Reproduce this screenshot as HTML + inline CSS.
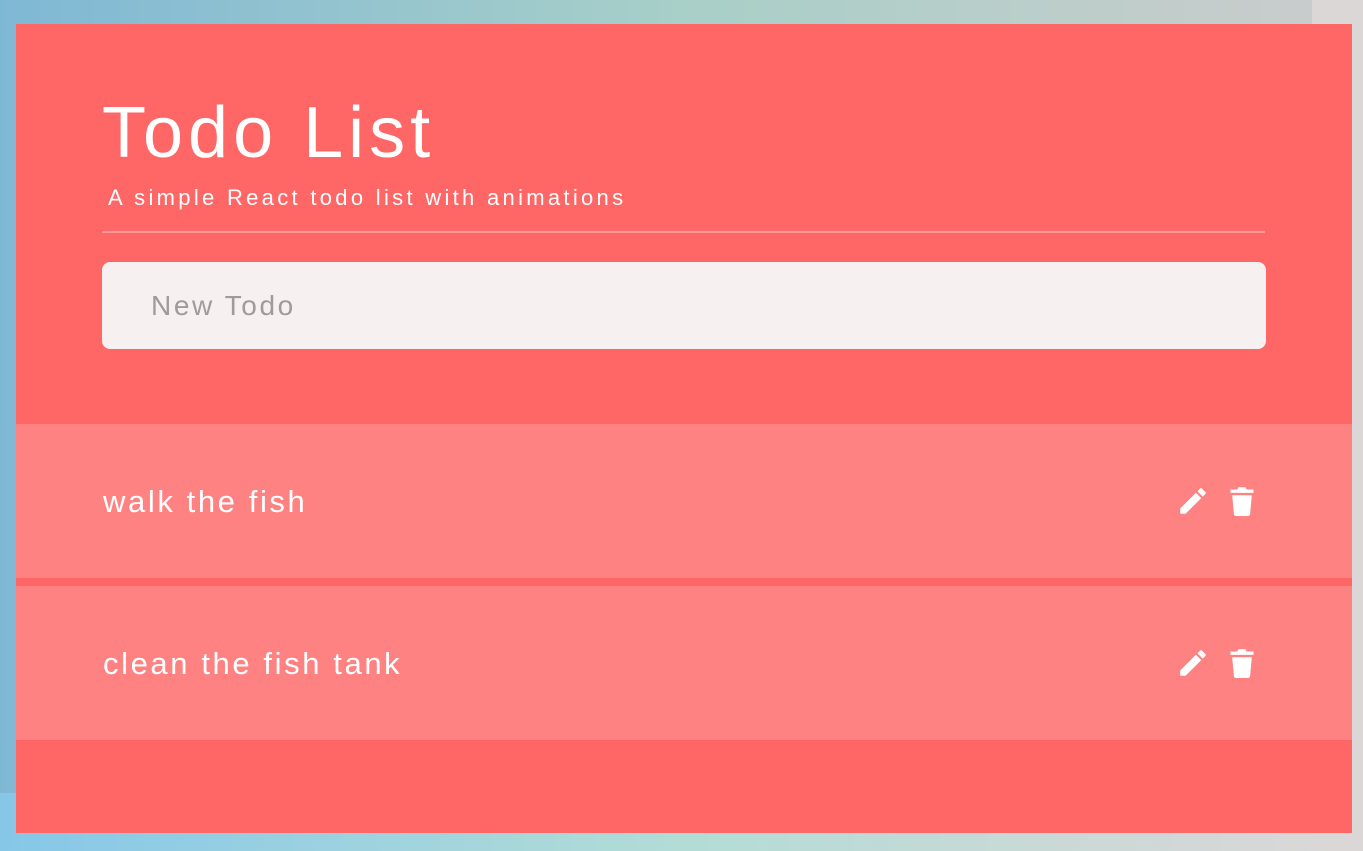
<!DOCTYPE html>
<html><head><style>
body{margin:0;width:1363px;height:851px;overflow:hidden;position:relative;font-family:"Liberation Sans",sans-serif;background:linear-gradient(90deg,#7fb8d5 0%,#a8cfc8 50%,#cccccc 100%);}
.rs{position:absolute;left:1312px;top:0;width:51px;height:851px;background:#dcd7d7}
.bs{position:absolute;left:0;top:793px;width:1363px;height:58px;background:linear-gradient(90deg,#86c7e8 0%,#b3dcd6 50%,#dcd7d7 100%)}
.card{position:absolute;left:16px;top:24px;width:1336px;height:809px;background:#ff6666}
h1{position:absolute;left:86px;top:64px;margin:0;font-weight:normal;font-size:72px;color:#fff;letter-spacing:5px;line-height:90px}
.sub{position:absolute;left:92px;top:161px;font-size:22px;color:#fff;letter-spacing:3.3px}
.hr{position:absolute;left:86px;top:207px;width:1163px;height:2px;background:#ff9a9a}
.inp{position:absolute;left:86px;top:238px;width:1164px;height:87px;border-radius:8px;background:#f6f0f0}
.inp span{position:absolute;left:49px;top:28px;font-size:28px;color:#a09a9a;letter-spacing:2.6px}
.item{position:absolute;left:0;width:1336px;height:154px;background:#ff8282}
.item .t{position:absolute;left:87px;top:60px;font-size:31px;color:#fff;letter-spacing:2.6px}
.item svg{position:absolute;top:60px}
</style></head><body>
<div class="rs"></div><div class="bs"></div>
<div class="card">
<h1>Todo List</h1>
<div class="sub">A simple React todo list with animations</div>
<div class="hr"></div>
<div class="inp"><span>New Todo</span></div>
<div class="item" style="top:400px"><div class="t">walk the fish</div>
<svg style="left:1160px" width="34" height="34" viewBox="0 0 24 24"><path fill="#fff" d="M3 17.25V21h3.75L17.81 9.94l-3.75-3.75L3 17.25zM20.71 7.04a1 1 0 000-1.41l-2.34-2.34a1 1 0 00-1.41 0l-1.83 1.83 3.75 3.75 1.83-1.83z"/></svg>
<svg style="left:1212px;top:62px" width="28" height="30" viewBox="0 0 24 26"><path fill="#fff" d="M2 3h6l1-2h6l1 2h6v3H2zM3.5 8h17l-1.5 16.5c-.1 1-1 1.5-2 1.5H7c-1 0-1.9-.5-2-1.5z"/></svg></div>
<div class="item" style="top:562px"><div class="t">clean the fish tank</div>
<svg style="left:1160px" width="34" height="34" viewBox="0 0 24 24"><path fill="#fff" d="M3 17.25V21h3.75L17.81 9.94l-3.75-3.75L3 17.25zM20.71 7.04a1 1 0 000-1.41l-2.34-2.34a1 1 0 00-1.41 0l-1.83 1.83 3.75 3.75 1.83-1.83z"/></svg>
<svg style="left:1212px;top:62px" width="28" height="30" viewBox="0 0 24 26"><path fill="#fff" d="M2 3h6l1-2h6l1 2h6v3H2zM3.5 8h17l-1.5 16.5c-.1 1-1 1.5-2 1.5H7c-1 0-1.9-.5-2-1.5z"/></svg></div>
</div>
</body></html>
